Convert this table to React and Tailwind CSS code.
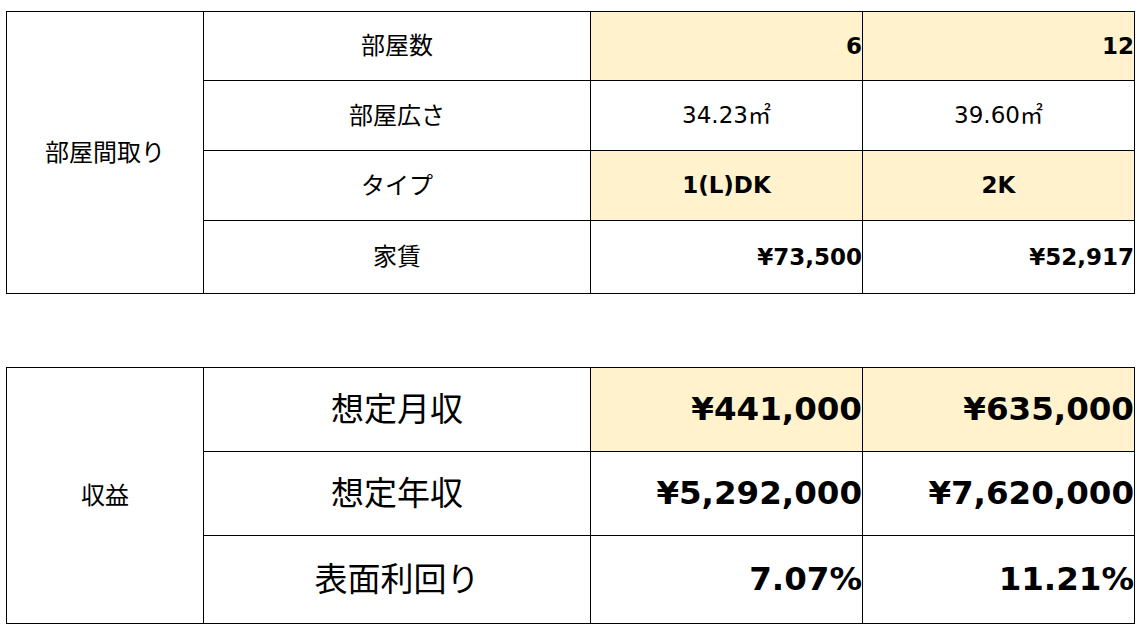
import React from 'react';

const font = "font-['DejaVu_Sans','Noto_Sans_CJK_JP',sans-serif]";

const roomRows = [
  { label: '部屋数', a: '6', b: '12', fill: true, bold: true, align: 'right', h: 'h-[69px]' },
  { label: '部屋広さ', a: '34.23㎡', b: '39.60㎡', fill: false, bold: false, align: 'center', h: 'h-[70px]' },
  { label: 'タイプ', a: '1(L)DK', b: '2K', fill: true, bold: true, align: 'center', h: 'h-[70px]' },
  { label: '家賃', a: '¥73,500', b: '¥52,917', fill: false, bold: true, align: 'right', h: 'h-[73px]' },
];

const incomeRows = [
  { label: '想定月収', a: '¥441,000', b: '¥635,000', fill: true, h: 'h-[84px]' },
  { label: '想定年収', a: '¥5,292,000', b: '¥7,620,000', fill: false, h: 'h-[84px]' },
  { label: '表面利回り', a: '7.07%', b: '11.21%', fill: false, h: 'h-[88px]' },
];

const Cell = ({ children, className }) => (
  <div className={`flex items-center border-r border-b border-black overflow-hidden whitespace-nowrap ${className}`}>
    {children}
  </div>
);

const App = () => {
  return (
    <div className={`w-[1144px] h-[640px] bg-white text-black ${font} pl-[6px] pt-[11px]`}>
      {/* 部屋間取り */}
      <div className="flex w-max border-t border-l border-black">
        <Cell className="w-[197px] justify-center text-[24px]">部屋間取り</Cell>
        <div className="flex flex-col">
          {roomRows.map((r) => {
            const val = `w-[272px] ${r.align === 'right' ? 'justify-end' : 'justify-center'} text-[23px] ${r.bold ? 'font-bold' : ''} ${r.fill ? 'bg-[#fff2cc]' : ''}`;
            return (
              <div key={r.label} className={`flex ${r.h}`}>
                <Cell className="w-[387px] justify-center text-[24px]">{r.label}</Cell>
                <Cell className={val}>{r.a}</Cell>
                <Cell className={val}>{r.b}</Cell>
              </div>
            );
          })}
        </div>
      </div>

      {/* 収益 */}
      <div className="mt-[73px] flex w-max border-t border-l border-black">
        <Cell className="w-[197px] justify-center text-[24px]">収益</Cell>
        <div className="flex flex-col">
          {incomeRows.map((r) => {
            const val = `w-[272px] justify-end text-[32.5px] font-bold ${r.fill ? 'bg-[#fff2cc]' : ''}`;
            return (
              <div key={r.label} className={`flex ${r.h}`}>
                <Cell className="w-[387px] justify-center text-[33px]">{r.label}</Cell>
                <Cell className={val}>{r.a}</Cell>
                <Cell className={val}>{r.b}</Cell>
              </div>
            );
          })}
        </div>
      </div>
    </div>
  );
};

export default App;
